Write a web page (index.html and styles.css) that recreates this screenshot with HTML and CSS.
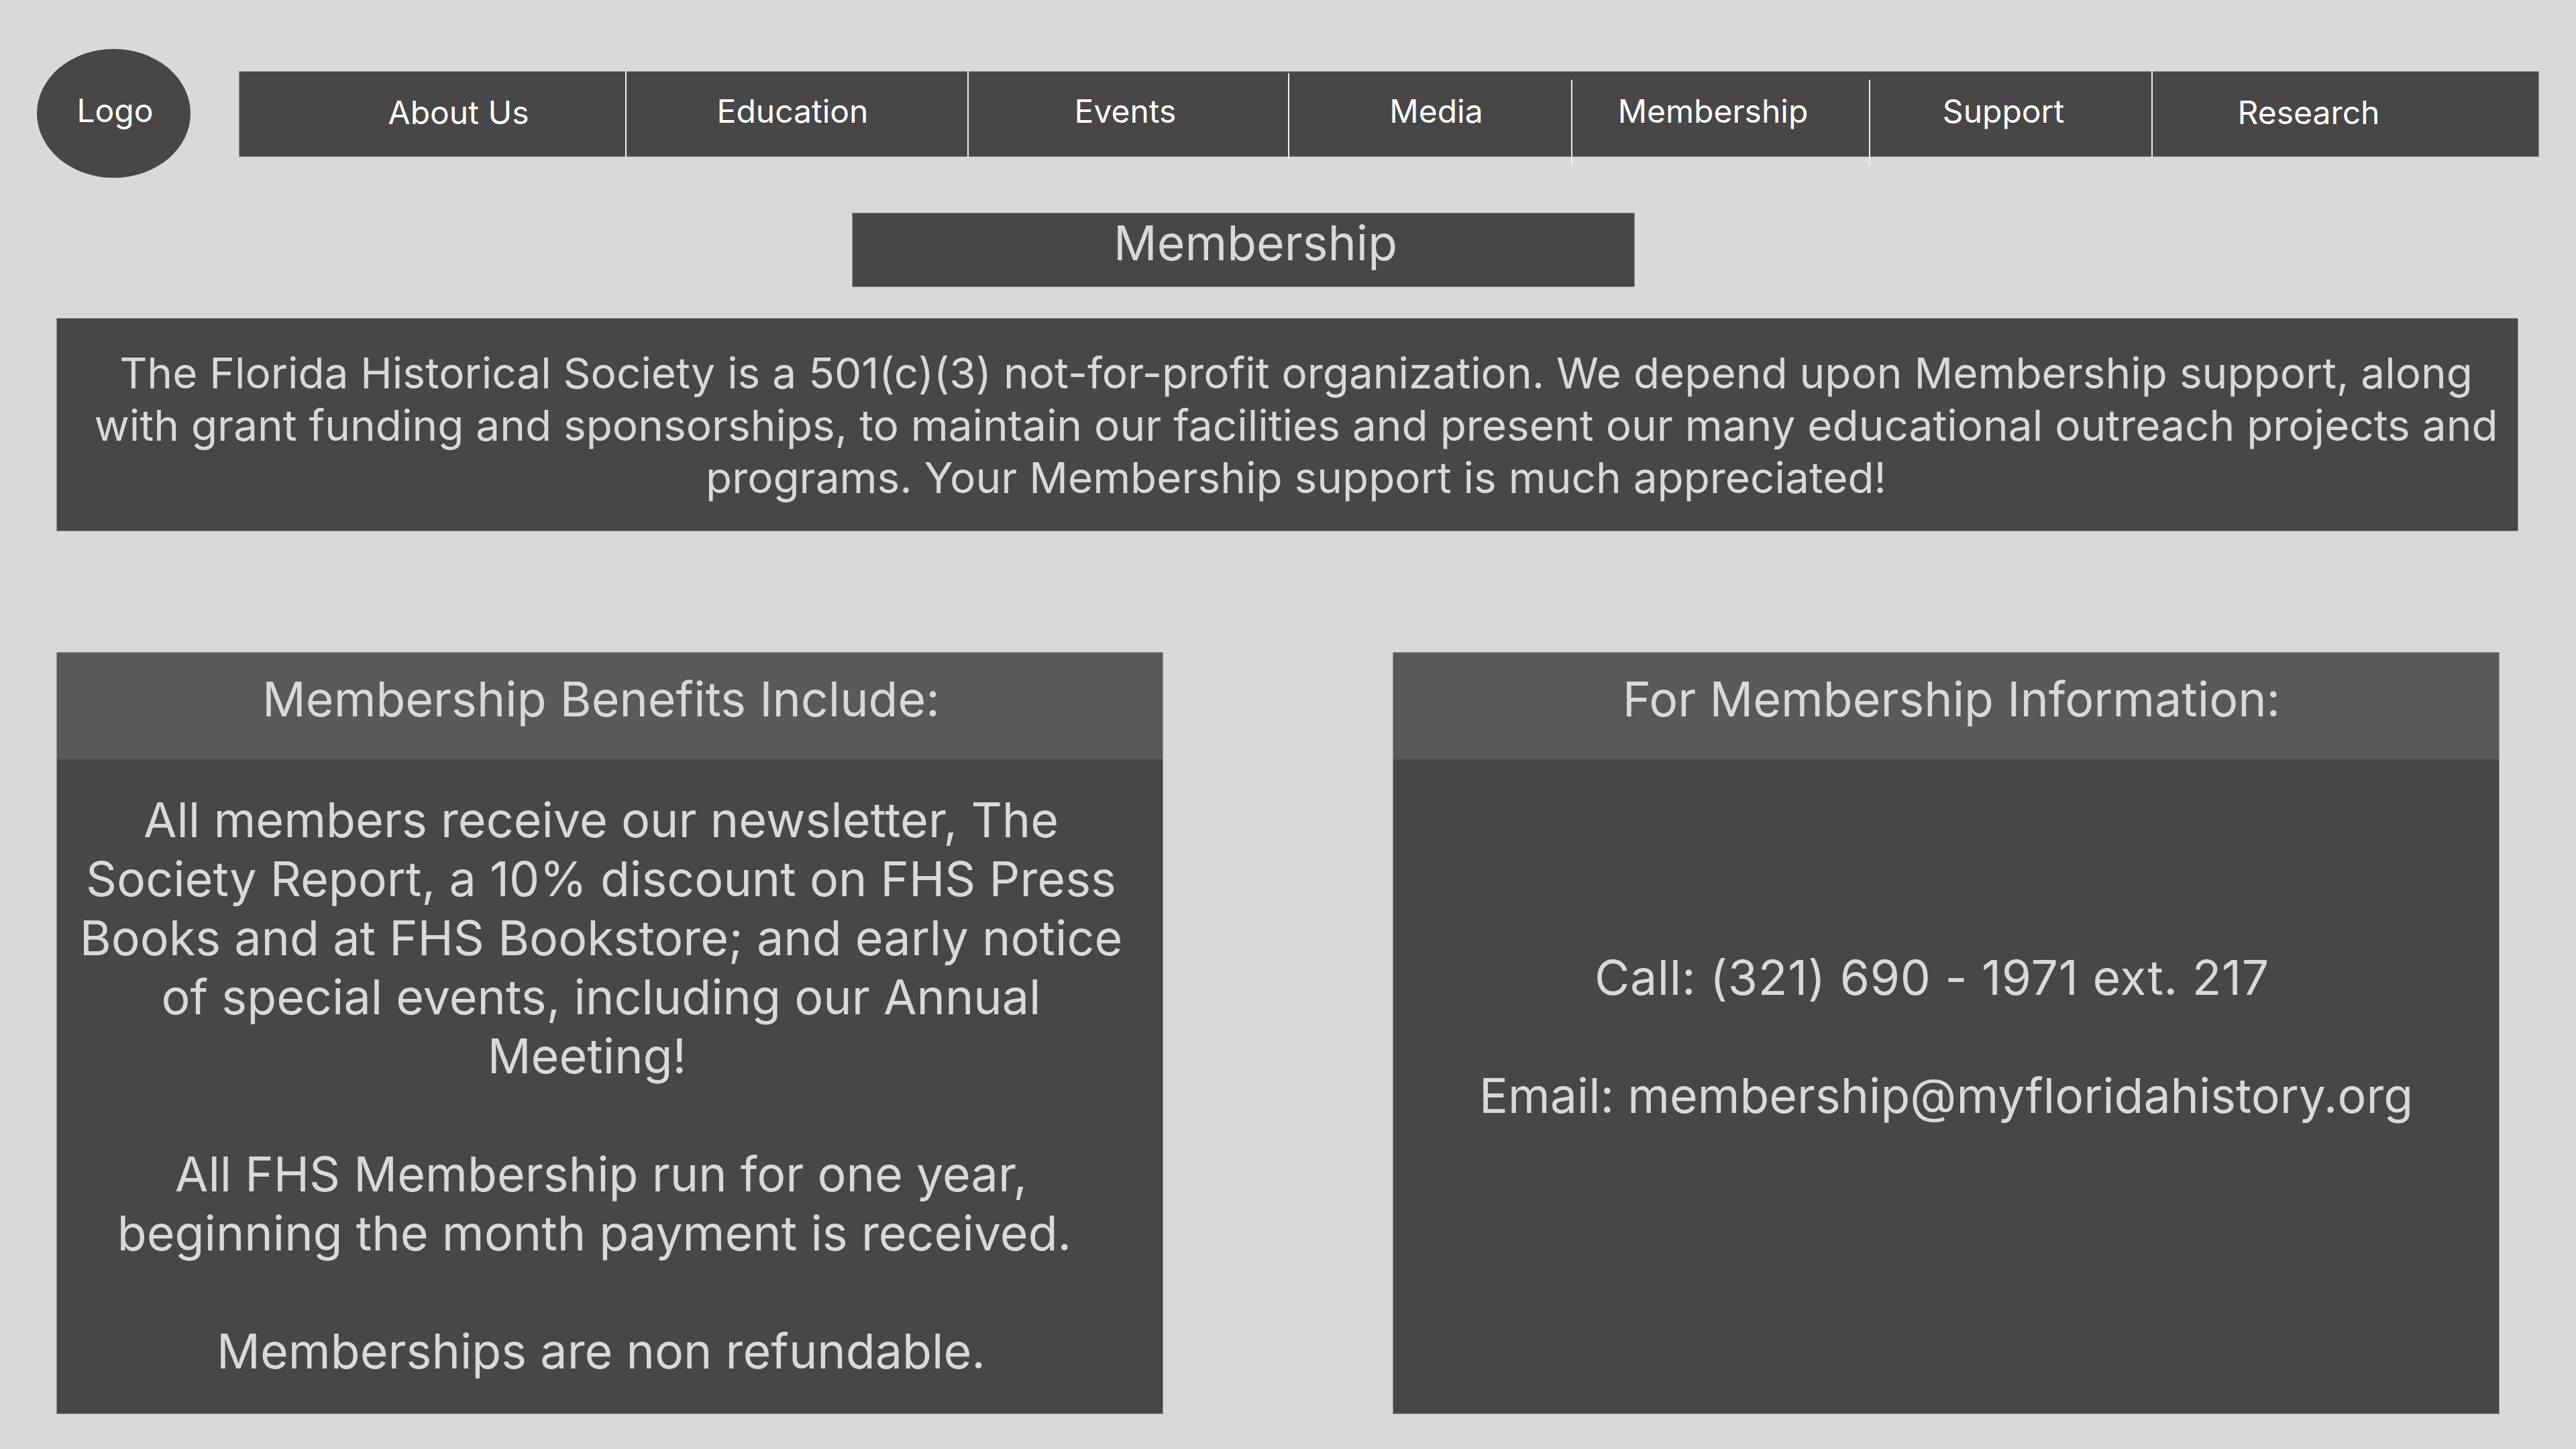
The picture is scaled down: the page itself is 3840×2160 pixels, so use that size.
FILE: index.html
```html
<!DOCTYPE html>
<html lang="en">
<head>
  <meta charset="UTF-8">
  <title>Florida Historical Society – Membership</title>
  <link rel="stylesheet" href="styles.css">
</head>
<body>

  <header class="top">
    <div class="logo">Logo</div>
    <nav class="nav">
      <a class="nav-item about">About Us</a>
      <a class="nav-item education">Education</a>
      <a class="nav-item events">Events</a>
      <a class="nav-item media">Media</a>
      <a class="nav-item membership">Membership</a>
      <a class="nav-item support">Support</a>
      <a class="nav-item research">Research</a>
    </nav>
  </header>

  <h1 class="page-title">Membership</h1>

  <p class="intro">
    The Florida Historical Society is a 501(c)(3) not-for-profit organization. We depend upon Membership support, along<br>
    with grant funding and sponsorships, to maintain our facilities and present our many educational outreach projects and<br>
    programs. Your Membership support is much appreciated!
  </p>

  <main class="panels">
    <section class="panel">
      <h2 class="panel-head benefits-head">Membership Benefits Include:</h2>
      <div class="panel-body benefits">
        <p>All members receive our newsletter, The<br>
        Society Report, a 10% discount on FHS Press<br>
        Books and at FHS Bookstore; and early notice<br>
        of special events, including our Annual<br>
        <span class="meeting">Meeting!</span></p>
        <p>All FHS Membership run for one year,<br>
        <span class="beginning">beginning the month payment is received.</span></p>
        <p>Memberships are non refundable.</p>
      </div>
    </section>

    <section class="panel">
      <h2 class="panel-head info-head">For Membership Information:</h2>
      <div class="panel-body info">
        <p class="call">Call: (321) 690 - 1971 ext. 217</p>
        <p class="email">Email: membership@myfloridahistory.org</p>
      </div>
    </section>
  </main>

</body>
</html>
```

FILE: styles.css
```css
body {
  margin: 0;
  height: 2160px;
  overflow: hidden;
  background-color: #d9d9d9;
  font-family: Inter, "Liberation Sans", sans-serif;
  color: #d9d9d9;
}

.top {
  display: flex;
  align-items: flex-start;
  padding: 73px 55px 0 55px;
}

.logo {
  width: 229px;
  height: 192px;
  padding-left: 4px;
  box-sizing: border-box;
  border-radius: 50%;
  background-color: #484646;
  color: #fff;
  font-size: 48px;
  line-height: 184px;
  text-align: center;
}

.nav {
  display: flex;
  width: 3427px;
  height: 126px;
  margin: 34px 0 0 73px;
  background-color: #484646;
  box-shadow: 0 0 0 1px #929191;
}

.nav-item {
  position: relative;
  display: block;
  box-sizing: border-box;
  color: #fff;
  font-size: 48px;
  line-height: 118px;
  text-align: center;
}

.nav-item::after {
  content: "";
  position: absolute;
  top: -1px;
  right: 0;
  width: 2px;
  height: 128px;
  background-color: #f0f0f0;
}

.about { width: 577px; padding-left: 76px; line-height: 122px; }
.education { width: 510px; padding-right: 15px; }
.events { width: 478px; padding-right: 11px; }
.media { width: 422px; padding-left: 16px; }
.membership { width: 444px; padding-right: 25px; }
.support { width: 421px; padding-right: 24px; }
.research { width: 575px; padding-right: 110px; line-height: 122px; }

.events::after { top: 2px; }
.media::after, .membership::after { top: 12px; }
.research::after { display: none; }

.page-title {
  width: 1165px;
  height: 109px;
  margin: 53px 0 0 1271px;
  background-color: #484646;
  box-shadow: 0 0 0 1px #929191;
  font-size: 71.6px;
  font-weight: 400;
  line-height: 88px;
  text-align: center;
  text-indent: 36px;
}

.intro {
  box-sizing: border-box;
  width: 3668px;
  height: 316px;
  margin: 48px 0 0 85px;
  padding: 42px 0 0 26px;
  background-color: #484646;
  box-shadow: 0 0 0 1px #929191;
  font-size: 63.9px;
  line-height: 78px;
  text-align: center;
  white-space: nowrap;
}

.panels {
  display: flex;
  gap: 344px;
  margin: 182px 0 0 85px;
}

.panel {
  width: 1648px;
  height: 1134px;
  background-color: #484646;
  box-shadow: 0 0 0 1px #929191;
}

.panel-head {
  box-sizing: border-box;
  height: 159px;
  margin: 0;
  padding-top: 25px;
  background-color: #5a5858;
  font-size: 71.7px;
  font-weight: 400;
  line-height: 88px;
  text-align: center;
}

.benefits-head { padding-right: 26px; }
.info-head { padding-left: 16px; }

.panel-body {
  font-size: 71.8px;
  line-height: 88px;
  text-align: center;
  white-space: nowrap;
}

.panel-body p { margin: 0 0 88px 0; }

.benefits { padding: 46px 26px 0 0; }
.info { padding-top: 281px; font-size: 71.6px; }

.meeting { margin-right: 42px; }
.beginning { margin-right: 20px; }
.call { padding-right: 42px; letter-spacing: 0.7px; }
```
